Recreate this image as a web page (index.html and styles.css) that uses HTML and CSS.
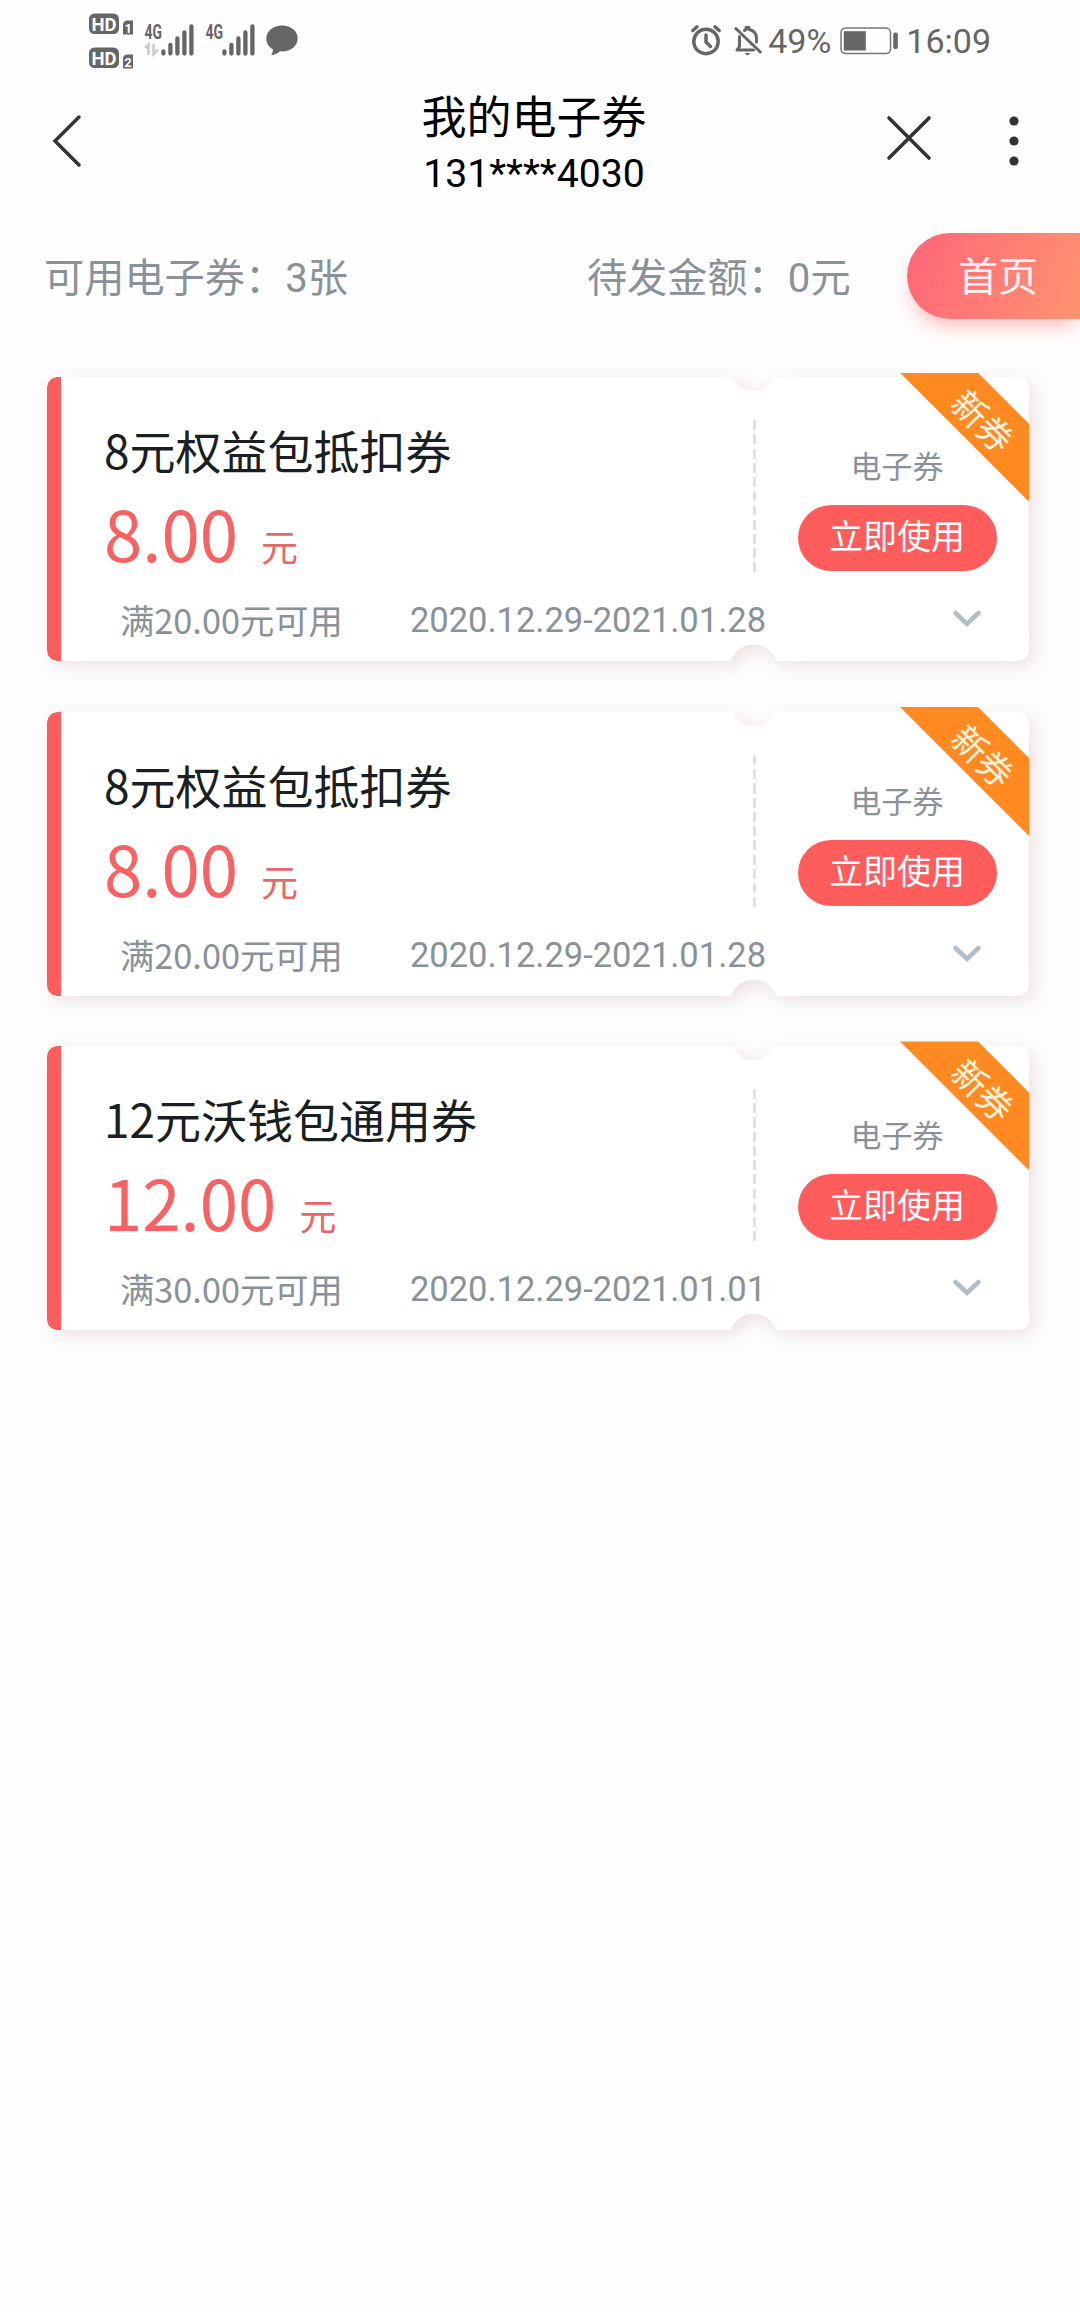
FILE: index.html
```html
<!DOCTYPE html>
<html lang="zh-CN">
<head>
    <meta charset="UTF-8">
    <meta name="viewport" content="width=device-width, initial-scale=1.0">
    <title>我的电子券</title>
    <link rel="stylesheet" href="styles.css">
</head>
<body>
    <div class="status-bar">
        <div class="status-left">
            <svg class="hd-icon" width="46" height="66" viewBox="0 -6 46 66">
                <rect x="1" y="0.5" width="28" height="18.500" rx="4.5" fill="#666" stroke="#666" stroke-width="2"/>
                <text x="2.500" y="16.600" class="hd-text" textLength="25" lengthAdjust="spacingAndGlyphs">HD</text>
                <path d="M34 11q0-4.500 4.500-4.500h5.500v14H34z" fill="#666"/>
                <text x="35.500" y="18.500" class="sim-text">1</text>
                <rect x="1" y="34.5" width="28" height="18.500" rx="4.5" fill="#666" stroke="#666" stroke-width="2"/>
                <text x="2.500" y="50.600" class="hd-text" textLength="25" lengthAdjust="spacingAndGlyphs">HD</text>
                <path d="M34 45q0-4.500 4.500-4.500h5.500v14H34z" fill="#666"/>
                <text x="35.300" y="52.500" class="sim-text">2</text>
            </svg>
            <svg class="signal-icon" width="51" height="46" viewBox="0 -6 51 46">
                <text x="0.5" y="14.5" class="net-text" textLength="17.500" lengthAdjust="spacingAndGlyphs">4G</text>
                <path d="M1 24l3.500-3.500v10.500M9.500 20v10l4.500-4.500" fill="none" stroke="#ccc" stroke-width="2.600"/>
                <path d="M19.400 27.500v2M26.400 21v8.500M33.400 14.500v15M40.400 8.500v21M47.400 2.500v27" stroke="#666" stroke-width="4.300" stroke-linecap="round"/>
            </svg>
            <svg class="signal-icon" width="51" height="46" viewBox="0 -6 51 46">
                <text x="0.5" y="14.5" class="net-text" textLength="17.500" lengthAdjust="spacingAndGlyphs">4G</text>
                <path d="M19.400 27.500v2M26.400 21v8.500M33.400 14.500v15M40.400 8.500v21M47.400 2.500v27" stroke="#666" stroke-width="4.300" stroke-linecap="round"/>
            </svg>
            <svg width="32" height="31" viewBox="0 0 32 31">
                <path d="M16 0.500C7 0.500 .3 6.200.3 13.500c0 5 2.700 8.700 6.700 11 0 2-.7 4.200-2 5.800 4-.4 7-2 9-4 .7.100 1.300.100 2 .1 9 0 15.700-5.700 15.700-13S25 .5 16 .5z" fill="#666"/>
            </svg>
        </div>
        <div class="status-right">
            <svg class="alarm-icon" width="30" height="31" viewBox="0 0 30 31" fill="none" stroke="#666" stroke-width="3.500" stroke-linecap="round">
                <circle cx="15" cy="16.500" r="12.200"/>
                <path d="M15 10v7l4.500 4.500M1.800 5.500L6 1.800M28.200 5.500L24 1.800"/>
            </svg>
            <svg class="bell-icon" width="28" height="31" viewBox="0 0 28 31" fill="none" stroke="#666" stroke-width="3" stroke-linecap="round" stroke-linejoin="round">
                <path d="M1.800 3.500l24.500 23.500"/>
                <path d="M5.500 11.500v10L3 25h16.500M10.500 5.500l1.500-1.200V2.500h3v2c5 1 7.500 4 7.500 8.500v4"/>
                <path d="M10.500 28h6l-3 2.500z" fill="#666" stroke="none"/>
            </svg>
            <span class="battery-text">49%</span>
            <svg class="battery-icon" width="59" height="28" viewBox="0 0 59 28">
                <rect x="1" y="1" width="49.500" height="25.500" rx="4.500" fill="none" stroke="#777" stroke-width="1.500"/>
                <rect x="3.800" y="4.200" width="22" height="19.300" fill="#666"/>
                <rect x="53.300" y="5.500" width="4.500" height="16.500" rx="1.800" fill="#666"/>
            </svg>
            <span class="clock">16:09</span>
        </div>
    </div>

    <header class="header">
        <svg class="back" width="32" height="56" viewBox="0 0 32 56">
            <path d="M28 4L4 28l24 24" fill="none" stroke="#333" stroke-width="3.500" stroke-linecap="round"/>
        </svg>
        <div class="heading">
            <h1>我的电子券</h1>
            <p>131****4030</p>
        </div>
        <div class="actions">
            <svg class="close" width="46" height="46" viewBox="0 0 46 46">
                <path d="M3 3l40 40M43 3L3 43" fill="none" stroke="#333" stroke-width="3.600" stroke-linecap="round"/>
            </svg>
            <svg class="more" width="10" height="50" viewBox="0 0 10 50" fill="#333">
                <circle cx="5" cy="5" r="4.600"/>
                <circle cx="5" cy="25" r="4.600"/>
                <circle cx="5" cy="45" r="4.600"/>
            </svg>
        </div>
    </header>

    <div class="summary">
        <span>可用电子券：3张</span>
        <span class="pending">待发金额：0元</span>
        <a class="home-btn">首页</a>
    </div>

    <main class="coupon-list">
        <div class="coupon">
            <div class="coupon-shape"><div class="coupon-bg"></div></div>
            <div class="coupon-main">
                <h2>8元权益包抵扣券</h2>
                <div class="price">8.00<span class="unit">元</span></div>
                <div class="terms">
                    <span>满20.00元可用</span>
                    <span class="date">2020.12.29-2021.01.28</span>
                </div>
            </div>
            <div class="divider"></div>
            <div class="coupon-side">
                <span class="type">电子券</span>
                <a class="use-btn">立即使用</a>
                <svg class="arrow" width="30" height="20" viewBox="0 0 30 20">
                    <path d="M3.500 4L15 15 26.500 4" fill="none" stroke="#b1bec8" stroke-width="4.500" stroke-linecap="round"/>
                </svg>
            </div>
            <div class="ribbon"><span>新券</span></div>
        </div>

        <div class="coupon">
            <div class="coupon-shape"><div class="coupon-bg"></div></div>
            <div class="coupon-main">
                <h2>8元权益包抵扣券</h2>
                <div class="price">8.00<span class="unit">元</span></div>
                <div class="terms">
                    <span>满20.00元可用</span>
                    <span class="date">2020.12.29-2021.01.28</span>
                </div>
            </div>
            <div class="divider"></div>
            <div class="coupon-side">
                <span class="type">电子券</span>
                <a class="use-btn">立即使用</a>
                <svg class="arrow" width="30" height="20" viewBox="0 0 30 20">
                    <path d="M3.500 4L15 15 26.500 4" fill="none" stroke="#b1bec8" stroke-width="4.500" stroke-linecap="round"/>
                </svg>
            </div>
            <div class="ribbon"><span>新券</span></div>
        </div>

        <div class="coupon">
            <div class="coupon-shape"><div class="coupon-bg"></div></div>
            <div class="coupon-main">
                <h2>12元沃钱包通用券</h2>
                <div class="price">12.00<span class="unit">元</span></div>
                <div class="terms">
                    <span>满30.00元可用</span>
                    <span class="date">2020.12.29-2021.01.01</span>
                </div>
            </div>
            <div class="divider"></div>
            <div class="coupon-side">
                <span class="type">电子券</span>
                <a class="use-btn">立即使用</a>
                <svg class="arrow" width="30" height="20" viewBox="0 0 30 20">
                    <path d="M3.500 4L15 15 26.500 4" fill="none" stroke="#b1bec8" stroke-width="4.500" stroke-linecap="round"/>
                </svg>
            </div>
            <div class="ribbon"><span>新券</span></div>
        </div>
    </main>
</body>
</html>
```
FILE: styles.css
```css
* {
    box-sizing: border-box;
}

body {
    margin: 0;
    min-height: 100vh;
    background-color: #fefefe;
    font-family: Roboto, "Noto Sans CJK SC", sans-serif;
    color: #1a1f24;
}

h1, h2, p {
    margin: 0;
    font-weight: 400;
}

svg {
    display: block;
    flex: none;
    overflow: visible;
}

/* Status bar */
.status-bar {
    height: 80px;
    padding: 0 89px;
    display: flex;
    justify-content: space-between;
    color: #666;
}

.status-left,
.status-right {
    display: flex;
    align-items: center;
    height: 81px;
}

.hd-icon {
    margin-right: 9px;
}

.signal-icon {
    margin-right: 10px;
}

.hd-text {
    font: 700 19px Roboto, sans-serif;
    fill: #fff;
}

.sim-text {
    font: 700 13px Roboto, sans-serif;
    fill: #fff;
}

.net-text {
    font: 700 20px Roboto, sans-serif;
    fill: #666;
}

.alarm-icon {
    margin-right: 13px;
}

.bell-icon {
    margin-right: 6px;
}

.battery-text,
.clock {
    font-size: 34px;
    line-height: 80px;
}

.battery-icon {
    margin: 0 7px 0 9px;
}

/* Header */
.header {
    height: 122px;
    padding: 0 61px 0 51px;
    display: grid;
    grid-template-columns: 299px 1fr 301px;
    align-items: start;
    color: #000;
}

.back {
    margin-top: 33px;
}

.heading {
    padding-top: 12px;
    text-align: center;
}

.heading h1 {
    font-size: 45px;
    line-height: 54px;
}

.heading p {
    font-size: 39.200px;
    line-height: 56px;
}

.actions {
    display: flex;
    justify-content: flex-end;
    align-items: center;
    gap: 77px;
    padding-top: 35px;
}

.close {
    margin-bottom: 6px;
}

/* Summary row */
.summary {
    display: flex;
    align-items: center;
    height: 86px;
    margin-top: 31px;
    padding-left: 44px;
    font-size: 40.200px;
    color: #8a9299;
}

.summary span {
    padding-bottom: 3px;
}

.pending {
    margin-left: 239px;
}

.home-btn {
    width: 173px;
    height: 86px;
    margin-left: auto;
    padding-left: 51px;
    border-radius: 43px 0 0 43px;
    background: linear-gradient(110deg, #ff6a78 10%, #ff9171 95%);
    box-shadow: 0 11px 20px -5px rgba(255, 110, 110, 0.5);
    color: #fff2f0;
    font-size: 40px;
    line-height: 90px;
}

/* Coupons */
.coupon-list {
    display: flex;
    flex-direction: column;
    gap: 50.300px;
    padding: 58.300px 51px 0 47px;
}

.coupon {
    position: relative;
    display: flex;
    height: 284px;
}

.coupon-shape {
    position: absolute;
    inset: 0;
    filter: drop-shadow(5px 5px 10px rgba(150, 70, 70, 0.16));
}

/* white ticket with the two round notches cut out */
.coupon-bg {
    height: 100%;
    border-radius: 10px;
    background: linear-gradient(to right, #fb5e5d 14.500px, #fff 14.500px);
    -webkit-mask: radial-gradient(circle at 706.500px -7.500px, transparent 21.500px, #000 22px) top / 100% 50% no-repeat,
        radial-gradient(circle at 706.500px 149.500px, transparent 23.700px, #000 24.200px) bottom / 100% 50% no-repeat;
    mask: radial-gradient(circle at 706.500px -7.500px, transparent 21.500px, #000 22px) top / 100% 50% no-repeat,
        radial-gradient(circle at 706.500px 149.500px, transparent 23.700px, #000 24.200px) bottom / 100% 50% no-repeat;
}

.coupon-main {
    position: relative;
    width: 706px;
    padding: 42px 0 0 57px;
    font-family: "Noto Sans CJK SC", sans-serif;
    white-space: nowrap;
}

.coupon-main h2 {
    font-size: 46px;
    line-height: 60px;
}

.price {
    padding-top: 3px;
    font-size: 69px;
    line-height: 100px;
    color: #f86262;
}

.unit {
    margin-left: 23px;
    font-size: 37px;
    color: #e56868;
}

.terms {
    display: flex;
    align-items: center;
    gap: 67px;
    margin-top: -3px;
    padding-left: 16px;
    font-size: 34.300px;
    line-height: 50px;
    color: #8a9299;
}

.date {
    padding-top: 2px;
    font-family: Roboto, sans-serif;
    font-size: 34.500px;
}

.divider {
    position: relative;
    width: 3px;
    height: 153px;
    margin-top: 43px;
    background: repeating-linear-gradient(to bottom, #dde2e8 0, #dde2e8 10px, transparent 10px, transparent 14.250px);
}

.coupon-side {
    position: relative;
    flex: 1;
    display: flex;
    flex-direction: column;
    align-items: center;
    padding-top: 70px;
    padding-right: 12px;
    padding-left: 21px;
}

.type {
    font-size: 31px;
    line-height: 42px;
    color: #8a9299;
}

.use-btn {
    width: 199px;
    height: 66px;
    margin-top: 16px;
    border-radius: 33px;
    background-color: #ff5c5c;
    color: #fff;
    font-size: 34px;
    line-height: 65px;
    text-align: center;
}

.arrow {
    margin: 38px 0 0 139px;
}

.ribbon {
    position: absolute;
    top: -4.500px;
    right: 0;
    width: 129px;
    height: 129px;
    background-color: #ff8a22;
    clip-path: polygon(0 0, 78px 0, 100% 51px, 100% 100%);
}

.ribbon span {
    position: absolute;
    left: 45px;
    top: 30.500px;
    width: 72px;
    font-size: 35px;
    line-height: 40px;
    text-align: center;
    color: #fff3e0;
    transform: rotate(45deg);
}
```
